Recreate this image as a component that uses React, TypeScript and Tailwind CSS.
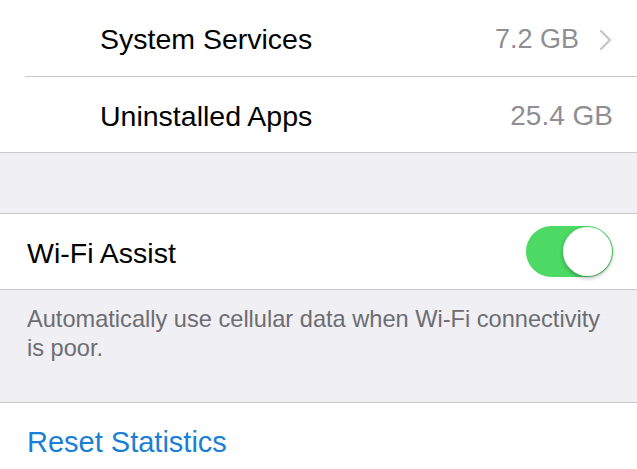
import React from 'react';

const font = { fontFamily: '"Liberation Sans", Arial, sans-serif' };

const Chevron: React.FC = () => (
  <svg width="13" height="22" viewBox="0 0 13 22" className="ml-[20px]">
    <path d="M2 2l9 9-9 9" fill="none" stroke="#c7c7cc" strokeWidth="2.4" strokeLinecap="round" strokeLinejoin="round" />
  </svg>
);

const App: React.FC = () => {
  return (
    <div className="w-[637px] h-[469px] overflow-hidden bg-[#efeff4] text-black" style={font}>
      {/* storage rows */}
      <div className="bg-white border-b border-[#c8c7cc]">
        <div className="flex items-center h-[76px] pt-[3px] pl-[100px] pr-[25px] text-[28.5px]">
          <span className="flex-1">System Services</span>
          <span className="text-[#8e8e93] text-[27px]">7.2 GB</span>
          <Chevron />
        </div>
        <div className="ml-[25px] h-px bg-[#c8c7cc]" />
        <div className="flex items-center h-[75px] pt-[3px] pl-[100px] pr-[24px] text-[28.5px]">
          <span className="flex-1">Uninstalled Apps</span>
          <span className="text-[#8e8e93] text-[28px]">25.4 GB</span>
        </div>
      </div>

      <div className="h-[60px]" />

      {/* wi-fi assist */}
      <div className="bg-white border-y border-[#c8c7cc] flex items-center h-[77px] pt-[3px] pl-[27px] pr-[24px] text-[28.5px]">
        <span className="flex-1">Wi-Fi Assist</span>
        <div className="relative -mt-[3px] w-[87px] h-[51px] rounded-full bg-[#4cd964]">
          <div className="absolute right-[1px] top-[1px] w-[49px] h-[49px] rounded-full bg-white shadow-[0_2px_4px_rgba(0,0,0,0.3)]" />
        </div>
      </div>
      <div className="h-[112px] pl-[27px] pr-[24px] pt-[15px] text-[23.6px] leading-[29px] text-[#6d6d72]">
        Automatically use cellular data when Wi-Fi connectivity is poor.
      </div>

      {/* reset */}
      <div className="bg-white border-t border-[#c8c7cc] h-[80px] flex items-center pl-[27px] text-[29px] text-[#1a7fd6]">
        Reset Statistics
      </div>
    </div>
  );
};

export default App;
